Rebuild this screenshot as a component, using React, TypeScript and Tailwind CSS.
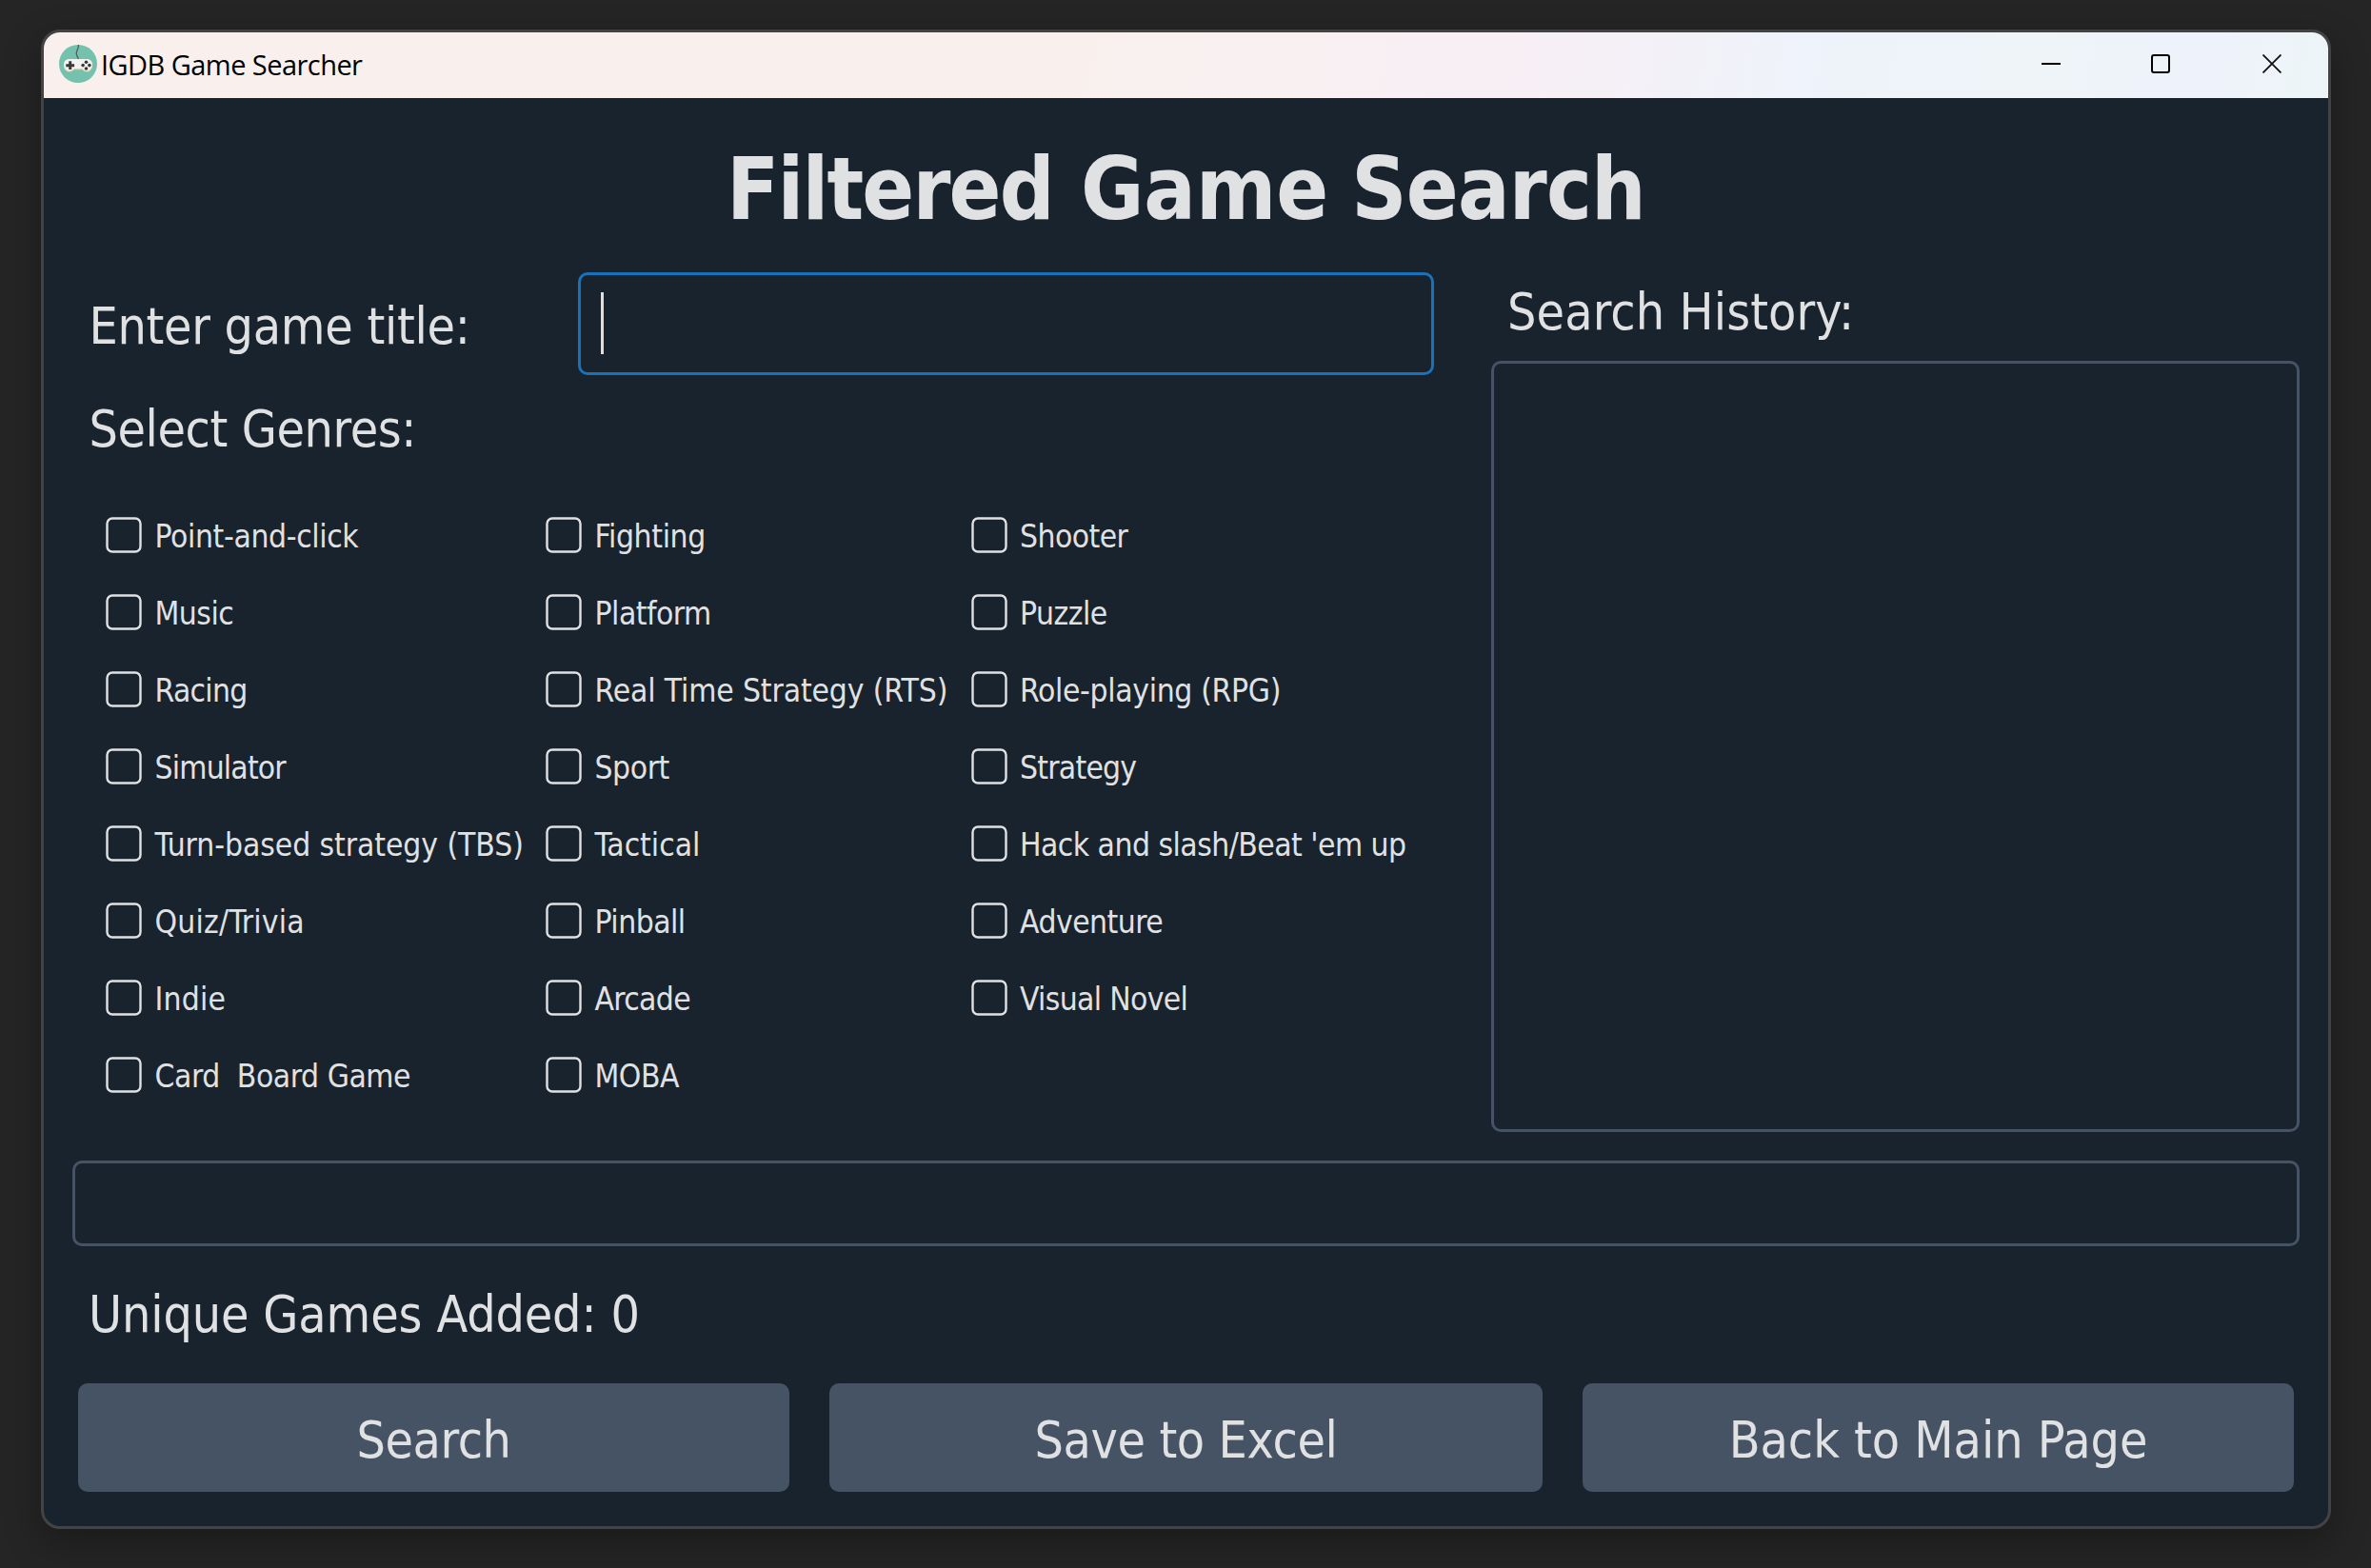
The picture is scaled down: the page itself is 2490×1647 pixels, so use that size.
import React from "react";

type Label = { name: string; tracking: string };

const GENRES: Label[][] = [
  [
    { name: "Point-and-click", tracking: "tracking-[-0.36px]" },
    { name: "Music", tracking: "tracking-[-0.5px]" },
    { name: "Racing", tracking: "tracking-[-0.7px]" },
    { name: "Simulator", tracking: "tracking-[-0.8px]" },
    { name: "Turn-based strategy (TBS)", tracking: "tracking-[-0.06px]" },
    { name: "Quiz/Trivia", tracking: "tracking-[0.2px]" },
    { name: "Indie", tracking: "tracking-[0.2px]" },
    { name: "Card  Board Game", tracking: "tracking-[-0.45px]" },
  ],
  [
    { name: "Fighting", tracking: "tracking-[-0.35px]" },
    { name: "Platform", tracking: "tracking-[-0.5px]" },
    { name: "Real Time Strategy (RTS)", tracking: "tracking-[-0.12px]" },
    { name: "Sport", tracking: "tracking-[-0.4px]" },
    { name: "Tactical", tracking: "tracking-normal" },
    { name: "Pinball", tracking: "tracking-[-0.5px]" },
    { name: "Arcade", tracking: "tracking-[-0.65px]" },
    { name: "MOBA", tracking: "tracking-[-0.5px]" },
  ],
  [
    { name: "Shooter", tracking: "tracking-[-0.55px]" },
    { name: "Puzzle", tracking: "tracking-[-0.5px]" },
    { name: "Role-playing (RPG)", tracking: "tracking-[-0.33px]" },
    { name: "Strategy", tracking: "tracking-[-0.75px]" },
    { name: "Hack and slash/Beat 'em up", tracking: "tracking-[-0.52px]" },
    { name: "Adventure", tracking: "tracking-[-0.5px]" },
    { name: "Visual Novel", tracking: "tracking-[-0.65px]" },
  ],
];

const COLUMN_WIDTHS = ["w-[462px]", "w-[446.5px]", "w-[480px]"];

const ACTIONS: Label[] = [
  { name: "Search", tracking: "tracking-[-0.4px]" },
  { name: "Save to Excel", tracking: "tracking-[-0.4px]" },
  { name: "Back to Main Page", tracking: "tracking-[-0.05px]" },
];

function AppIcon() {
  return (
    <svg width="40" height="40" viewBox="0 0 40 40" className="shrink-0">
      <circle cx="20" cy="20" r="20" fill="#74c2ae" />
      <path d="M20.500 0C20.500 5 18 6 18.300 9.500C18.500 12.500 20 12.500 20.300 15" fill="none" stroke="#47625c" strokeWidth="1.300" />
      <path d="M11 16.200H29C33 16.200 35 18.700 35 22C35 25.200 32.800 28.600 29.500 28.600C26 28.600 25.500 26.200 22.500 26.200H17.500C14.500 26.200 14 28.600 10.500 28.600C7.200 28.600 5 25.200 5 22C5 18.700 7 16.200 11 16.200Z" fill="#cfd3b8" />
      <path d="M11 15H29C33 15 35 17.500 35 20.800C35 24 32.800 27.400 29.500 27.400C26 27.400 25.500 25 22.500 25H17.500C14.500 25 14 27.400 10.500 27.400C7.200 27.400 5 24 5 20.800C5 17.500 7 15 11 15Z" fill="#f3f2f0" />
      <path d="M11.700 17.300V26.100M7.300 21.700H16.100" stroke="#3a3a3a" strokeWidth="3" />
      <g fill="#3a3a3a">
        <circle cx="28.500" cy="18.200" r="1.800" />
        <circle cx="28.500" cy="25" r="1.800" />
        <circle cx="25.100" cy="21.600" r="1.800" />
        <circle cx="31.900" cy="21.600" r="1.800" />
      </g>
    </svg>
  );
}

function Checkbox() {
  return (
    <svg width="38" height="38" viewBox="0 0 38 38" className="shrink-0">
      <rect x="1.500" y="1.500" width="35" height="35" rx="5.500" fill="none" stroke="#e0e1e3" strokeWidth="2.400" />
    </svg>
  );
}

export default function App() {
  return (
    <div className="flex h-[1647px] w-[2490px] bg-[#252525] pt-[31px] pl-[43px] font-['DejaVu_Sans_Condensed','DejaVu_Sans',sans-serif] text-[53.3px] leading-[64px] text-[#e0e1e3] [font-stretch:condensed]">
      <div className="flex h-[1575px] w-[2405px] flex-col overflow-hidden rounded-[20px] border-[3px] border-[#434343] bg-[#19232d] shadow-[0_14px_40px_rgba(0,0,0,0.3)]">
        <header className="flex h-[69px] shrink-0 items-center bg-[linear-gradient(100deg,#f9f0ee_0%,#f9f0ee_45%,#f7eff5_65%,#eef3fb_78%,#eef4f8_87%,#eef2fb_94%,#edf5f7_100%)] pb-[3px] pl-4 text-black">
          <AppIcon />
          <span className="ml-1 pt-px font-['Open_Sans',sans-serif] text-[29px] leading-10 tracking-[-0.55px] whitespace-nowrap [font-stretch:normal]">IGDB Game Searcher</span>
          <div className="mr-[49px] ml-auto flex items-center">
            <div className="h-0.5 w-5 bg-black" />
            <div className="ml-[95px] size-5 rounded-[3px] border-2 border-black" />
            <svg width="20" height="20" viewBox="0 0 20 20" className="ml-[97px]">
              <path d="M0.500 0.500L19.500 19.500M19.500 0.500L0.500 19.500" stroke="#111" strokeWidth="1.800" />
            </svg>
          </div>
        </header>

        <main className="flex flex-col pl-[30px]">
          <h1 className="mt-[42px] flex w-[2339px] justify-center text-[90px] leading-[108px] font-bold whitespace-nowrap">
            <span className="mr-[29px] tracking-[-1.800px]">Filtered</span>
            <span className="mr-[24px]">Game</span>
            <span className="tracking-[-0.8px]">Search</span>
          </h1>

          <div className="mt-[33px] flex h-[903px] gap-[60px]">
            <section className="w-[1430px]">
              <div className="flex h-[108px] items-center">
                <label className="w-[531px] shrink-0 pt-1.5 pl-[17.5px] tracking-[-0.3px] whitespace-nowrap">Enter game title:</label>
                <div className="flex h-[108px] w-[899px] items-center rounded-[10px] border-[3px] border-[#1a72bb] pb-px pl-[21px]">
                  <div className="h-[65px] w-[3px] bg-[#e6dcd2]" />
                </div>
              </div>
              <div className="mt-[25px] pl-[17.5px] tracking-[-0.42px] whitespace-nowrap">Select Genres:</div>
              <div className="mt-[39px] flex pl-[35px] text-[33.3px] leading-10">
                {GENRES.map((column, i) => (
                  <div key={i} className={COLUMN_WIDTHS[i]}>
                    {column.map(({ name, tracking }) => (
                      <label key={name} className="flex h-[81px] items-center pb-px whitespace-pre">
                        <Checkbox />
                        <span className={`ml-[13.5px] pt-[3px] ${tracking}`}>{name}</span>
                      </label>
                    ))}
                  </div>
                ))}
              </div>
            </section>

            <section className="w-[849px]">
              <div className="mt-[10px] pl-[17px] tracking-[0.1px] whitespace-nowrap">Search History:</div>
              <div className="mt-[19px] h-[810px] rounded-[10px] border-[3px] border-[#455364]" />
            </section>
          </div>

          <div className="mt-[30px] h-[90px] w-[2339px] rounded-[10px] border-[3px] border-[#455364]" />
          <div className="mt-10 pl-[17px] tracking-[-0.15px] whitespace-nowrap">Unique Games Added: 0</div>
          <div className="mt-10 grid grid-cols-[747px_749px_747px] gap-[42px] pl-1.5">
            {ACTIONS.map(({ name, tracking }) => (
              <button key={name} className={`h-[114px] rounded-[10px] bg-[#455364] pt-1.5 whitespace-nowrap ${tracking}`}>
                {name}
              </button>
            ))}
          </div>
        </main>
      </div>
    </div>
  );
}
